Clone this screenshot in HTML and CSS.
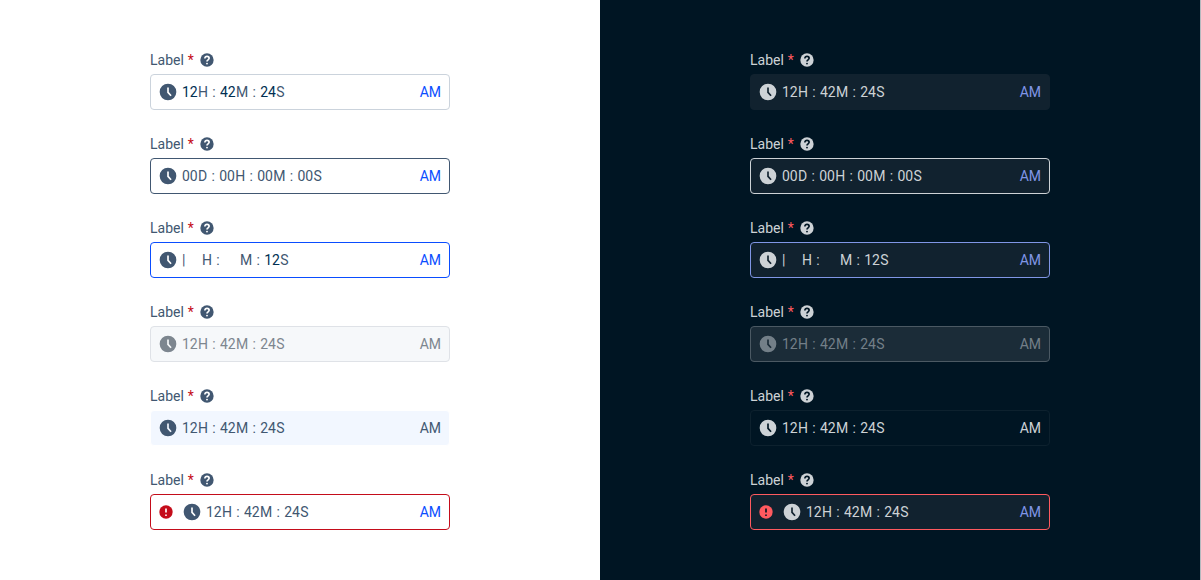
FILE: index.html
```
<!DOCTYPE html>
<html lang="en">
<head>
  <meta charset="UTF-8">
  <meta name="viewport" content="width=device-width, initial-scale=1.0">
  <title>Time input</title>
  <link rel="stylesheet" href="styles.css">
</head>
<body>
  <!-- shared icons -->
  <svg class="sprite" width="0" height="0" aria-hidden="true">
    <symbol id="icon-clock" viewBox="0 0 24 24">
      <path fill="currentColor" fill-rule="evenodd" d="M12 2a10 10 0 1 0 0 20 10 10 0 0 0 0-20zM11 6.5h2V12l3.4 3.8-1.5 1.4L11 12.9z"/>
    </symbol>
    <symbol id="icon-help" viewBox="0 0 24 24">
      <circle cx="12" cy="12" r="10" fill="currentColor"/>
      <path class="mark" d="M8.8 9.7c0-2 1.4-3.1 3.2-3.1s3.2 1.1 3.2 2.9c0 2.2-3.2 2.3-3.2 4.6"/>
      <circle class="dot" cx="12" cy="17.4" r="1.4"/>
    </symbol>
    <symbol id="icon-error" viewBox="0 0 24 24">
      <circle cx="12" cy="12" r="10" fill="currentColor"/>
      <path class="mark" d="M12 6.8v6"/>
      <circle class="dot" cx="12" cy="16.8" r="1.3"/>
    </symbol>
  </svg>

  <main id="light" class="panel"></main>
  <section id="dark" class="panel dark"></section>

  <script src="script.js"></script>
</body>
</html>
```

FILE: styles.css
```
* {
  box-sizing: border-box;
}
body {
  --text: #415771;
  --value: #415771;
  --filled: #002f52;
  --accent: #0a4dff;
  --danger: #c40c1a;
  --border: #cbd3dc;
  --strong: #415771;
  --field: #ffffff;
  --surface: #ffffff;
  display: grid;
  grid-template-columns: 1fr 1fr;
  min-height: 100vh;
  margin: 0;
  border-right: 1px solid #b3b9be;
  font-family: Roboto, "Liberation Sans", sans-serif;
  font-size: 14px;
  line-height: 20px;
}
.sprite {
  position: absolute;
}
.panel {
  display: flex;
  flex-direction: column;
  gap: 24px;
  padding: 50px 25%;
  color: var(--text);
  background: var(--surface);
}
.dark {
  --text: #cdd2d6;
  --value: #cdd2d6;
  --filled: #cdd2d6;
  --accent: #8096e6;
  --danger: #ff5a5f;
  --border: #11222f;
  --strong: #cdd2d6;
  --field: #11222f;
  --surface: #001523;
}
.time {
  min-width: 0;
}
.caption {
  display: flex;
  align-items: center;
  gap: 4px;
  margin-bottom: 4px;
}
.required {
  width: 7px;
  color: var(--danger);
}
button {
  padding: 0;
  border: 0;
  background: none;
  color: inherit;
  font: inherit;
  cursor: pointer;
}
.help {
  display: flex;
}
.icon {
  display: block;
  flex: none;
  width: 16px;
  height: 16px;
}
.mark {
  fill: none;
  stroke: var(--surface);
  stroke-width: 2.5;
}
.dot {
  fill: var(--surface);
}
.field {
  display: flex;
  align-items: center;
  height: 36px;
  padding: 0 8px 0 7px;
  border: 1px solid var(--border);
  border-radius: 4px;
  background: var(--field);
  color: var(--value);
}
.clock {
  width: 20px;
  height: 20px;
  margin-right: 4px;
}
.alert {
  margin-right: 8px;
  color: var(--danger);
}
.part {
  display: flex;
}
.part input {
  width: 16px;
  padding: 0;
  border: 0;
  outline: 0;
  background: none;
  color: inherit;
  font: inherit;
}
.colon {
  width: 12px;
  text-align: center;
}
.meridiem {
  margin-left: auto;
  color: var(--accent);
}

/* states */
.default .part input,
.focus .part input {
  color: var(--filled);
}
.hover {
  --border: var(--strong);
}
.focus .field {
  border-color: var(--accent);
}
.focus .part .caret {
  width: 20px;
  color: inherit;
}
.disabled .field {
  --value: #7d868f;
  --accent: #7d868f;
  border-color: #dfe2e7;
  background: #f6f8fa;
}
.dark .disabled .field {
  --value: #737f88;
  --accent: #737f88;
  border-color: #4b5963;
  background: #1b2c38;
}
.readonly .field {
  --accent: var(--value);
  border-color: #ffffff;
  background: #f2f7ff;
}
.dark .readonly .field {
  border-color: #0d212e;
  background: #001523;
}
.error .field {
  border-color: var(--danger);
}
```

FILE: script.js
```
const states = [
  { name: "default", parts: ["12H", "42M", "24S"] },
  { name: "hover", parts: ["00D", "00H", "00M", "00S"] },
  { name: "focus", parts: ["|H", "M", "12S"] },
  { name: "disabled", parts: ["12H", "42M", "24S"] },
  { name: "readonly", parts: ["12H", "42M", "24S"] },
  { name: "error", parts: ["12H", "42M", "24S"] }
];
const units = { D: "Days", H: "Hours", M: "Minutes", S: "Seconds" };

function icon(name, extra = "") {
  return `<svg class="icon ${extra}" aria-hidden="true"><use href="#icon-${name}"/></svg>`;
}

function renderPart(part, id, state) {
  const unit = part.slice(-1);
  const value = part.slice(0, -1);
  const attr = state === "disabled" ? "disabled" : state === "readonly" ? "readonly" : "";
  return `<span class="part">
    <input id="${id}-${unit}" class="${value === "|" ? "caret" : ""}" type="text" maxlength="2" value="${value}" aria-label="${units[unit]}" ${attr}>
    <label for="${id}-${unit}">${unit}</label>
  </span>`;
}

function renderTime(state, theme) {
  const id = `${theme}-${state.name}`;
  const first = `${id}-${state.parts[0].slice(-1)}`;
  const parts = state.parts.map(p => renderPart(p, id, state.name));
  return `<div class="time ${state.name}">
    <div class="caption">
      <label for="${first}">Label</label>
      <span class="required">*</span>
      <button class="help" type="button" aria-label="Help">${icon("help")}</button>
    </div>
    <div class="field">
      ${state.name === "error" ? icon("error", "alert") : ""}
      ${icon("clock", "clock")}
      ${parts.join('<span class="colon">:</span>')}
      <button class="meridiem" type="button" ${state.name === "disabled" ? "disabled" : ""}>AM</button>
    </div>
  </div>`;
}

["light", "dark"].forEach(theme => {
  document.getElementById(theme).innerHTML = states.map(s => renderTime(s, theme)).join("");
});
```
